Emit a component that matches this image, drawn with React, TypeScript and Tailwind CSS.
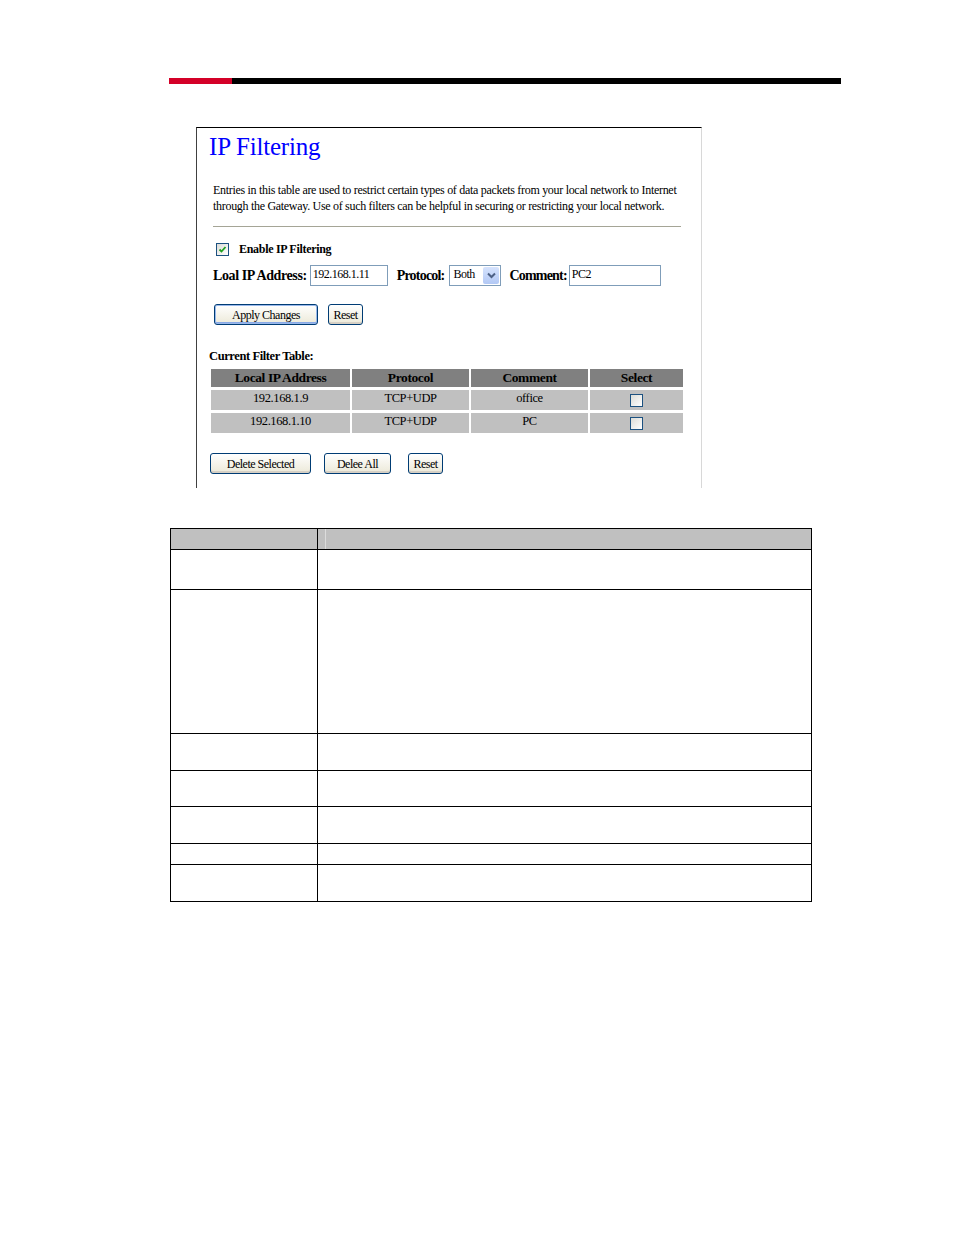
import React from "react";

const serif = { fontFamily: '"Liberation Serif", "Times New Roman", serif' };

function XpButton({ label, className = "", primary = false }: { label: string; className?: string; primary?: boolean }) {
  return (
    <div
      className={`flex h-[21px] items-center justify-center rounded-[3px] border border-[#003c74] bg-gradient-to-b from-white to-[#ece9d8] text-[12px] leading-none tracking-[-0.5px] text-black ${
        primary ? "shadow-[inset_0_0_0_1px_#99b8eb,inset_0_-2px_0_#89a9e6]" : "shadow-[inset_0_-2px_0_#d6d0c5]"
      } ${className}`}
    >
      {label}
    </div>
  );
}

function Check({ checked = false }: { checked?: boolean }) {
  return (
    <div className="flex h-[13px] w-[13px] items-center justify-center border border-[#1c5180] bg-gradient-to-br from-[#dcdcd7] to-white">
      {checked && (
        <svg width="9" height="9" viewBox="0 0 9 9">
          <path d="M1.5 4.5 L3.5 6.5 L7.5 2" stroke="#21a121" strokeWidth="1.8" fill="none" />
        </svg>
      )}
    </div>
  );
}

const rows = [
  { ip: "192.168.1.9", proto: "TCP+UDP", comment: "office" },
  { ip: "192.168.1.10", proto: "TCP+UDP", comment: "PC" },
];

const specRows = [40, 144, 37, 36, 37, 21, 37];

export default function App() {
  return (
    <div className="min-h-[1235px] w-[954px] bg-white pt-[78px]" style={serif}>
      {/* header rule */}
      <div className="ml-[169px] flex h-[6px] w-[672px]">
        <div className="w-[63px] bg-[#d40028]" />
        <div className="flex-1 bg-black" />
      </div>

      {/* screenshot panel */}
      <div className="ml-[196px] mt-[43px] h-[361px] w-[506px] border-l border-t border-l-[#404040] border-t-black border-r border-r-[#d8d8d8] pl-[12px]">
        <h1 className="mt-[5px] text-[25px] leading-[28px] tracking-[-0.2px] text-[#0000ff]">IP Filtering</h1>

        <p className="ml-[4px] mt-[21px] w-[468px] text-[12px] leading-[16px] tracking-[-0.3px] text-black">
          Entries in this table are used to restrict certain types of data packets from your local network to Internet
          through the Gateway. Use of such filters can be helpful in securing or restricting your local network.
        </p>

        <div className="ml-[4px] mt-[12px] h-[1px] w-[468px] bg-[#a5a596]" />

        <div className="ml-[7px] mt-[13px] flex items-center gap-[10px]">
          <Check checked />
          <span className="text-[12px] font-bold tracking-[-0.3px]">Enable IP Filtering</span>
        </div>

        <div className="ml-[4px] mt-[7px] flex items-center text-[14px] font-bold tracking-[-0.4px]">
          <span>Loal IP Address:</span>
          <div className="ml-[3px] h-[21px] w-[78px] border border-[#7f9db9] pl-[2px] text-[12px] font-normal leading-[16px] tracking-[-0.5px]">
            192.168.1.11
          </div>
          <span className="ml-[9px] tracking-[-0.8px]">Protocol:</span>
          <div className="ml-[5px] flex h-[21px] w-[52px] items-center border border-[#7f9db9] pl-[3px] text-[12px] font-normal tracking-[-0.5px]">
            <span className="flex-1 self-start leading-[16px]">Both</span>
            <div className="m-[1px] flex h-[17px] w-[16px] items-center justify-center rounded-[2px] bg-gradient-to-b from-[#d6e3fd] to-[#b2c8f5]">
              <svg width="9" height="7" viewBox="0 0 9 7">
                <path d="M1 1.5 L4.5 5 L8 1.5" stroke="#4d6185" strokeWidth="2" fill="none" />
              </svg>
            </div>
          </div>
          <span className="ml-[8px] tracking-[-0.8px]">Comment:</span>
          <div className="ml-[2px] h-[21px] w-[92px] border border-[#7f9db9] pl-[2px] text-[12px] font-normal leading-[16px] tracking-[-0.5px]">
            PC2
          </div>
        </div>

        <div className="ml-[5px] mt-[18px] flex gap-[10px]">
          <XpButton label="Apply Changes" primary className="w-[104px]" />
          <XpButton label="Reset" className="w-[35px]" />
        </div>

        <div className="mt-[24px] text-[12.5px] font-bold leading-[14px] tracking-[-0.4px]">Current Filter Table:</div>

        <div className="ml-[2px] mt-[6px] w-[473px] text-[12.5px] tracking-[-0.4px]">
          <div className="grid grid-cols-[139px_117px_117px_93px] gap-[2px]">
            <div className="flex h-[18px] items-center justify-center bg-[#808080] text-[13.5px] font-bold">Local IP Address</div>
            <div className="flex h-[18px] items-center justify-center bg-[#808080] text-[13.5px] font-bold">Protocol</div>
            <div className="flex h-[18px] items-center justify-center bg-[#808080] text-[13.5px] font-bold">Comment</div>
            <div className="flex h-[18px] items-center justify-center bg-[#808080] text-[13.5px] font-bold">Select</div>
          </div>
          {rows.map((r) => (
            <div key={r.ip} className="mt-[3px] grid grid-cols-[139px_117px_117px_93px] gap-[2px]">
              <div className="flex h-[20px] items-center justify-center bg-[#c0c0c0] pb-[3px]">{r.ip}</div>
              <div className="flex h-[20px] items-center justify-center bg-[#c0c0c0] pb-[3px]">{r.proto}</div>
              <div className="flex h-[20px] items-center justify-center bg-[#c0c0c0] pb-[3px]">{r.comment}</div>
              <div className="flex h-[20px] items-center justify-center bg-[#c0c0c0] pt-[1px]">
                <Check />
              </div>
            </div>
          ))}
        </div>

        <div className="ml-[1px] mt-[20px] flex">
          <XpButton label="Delete Selected" className="w-[101px]" />
          <XpButton label="Delee All" className="ml-[13px] w-[67px]" />
          <XpButton label="Reset" className="ml-[17px] w-[35px]" />
        </div>
      </div>

      {/* description table */}
      <div className="ml-[170px] mt-[40px] w-[642px] border-x border-t border-black">
        <div className="grid h-[21px] grid-cols-[147px_1fr] border-b border-black bg-[#c0c0c0]">
          <div className="border-r border-black" />
          <div className="ml-[7px] border-l border-[#dcdcdc]" />
        </div>
        {specRows.map((h, i) => (
          <div key={i} className="grid grid-cols-[147px_1fr] border-b border-black" style={{ height: h }}>
            <div className="border-r border-black" />
            <div />
          </div>
        ))}
      </div>
    </div>
  );
}
